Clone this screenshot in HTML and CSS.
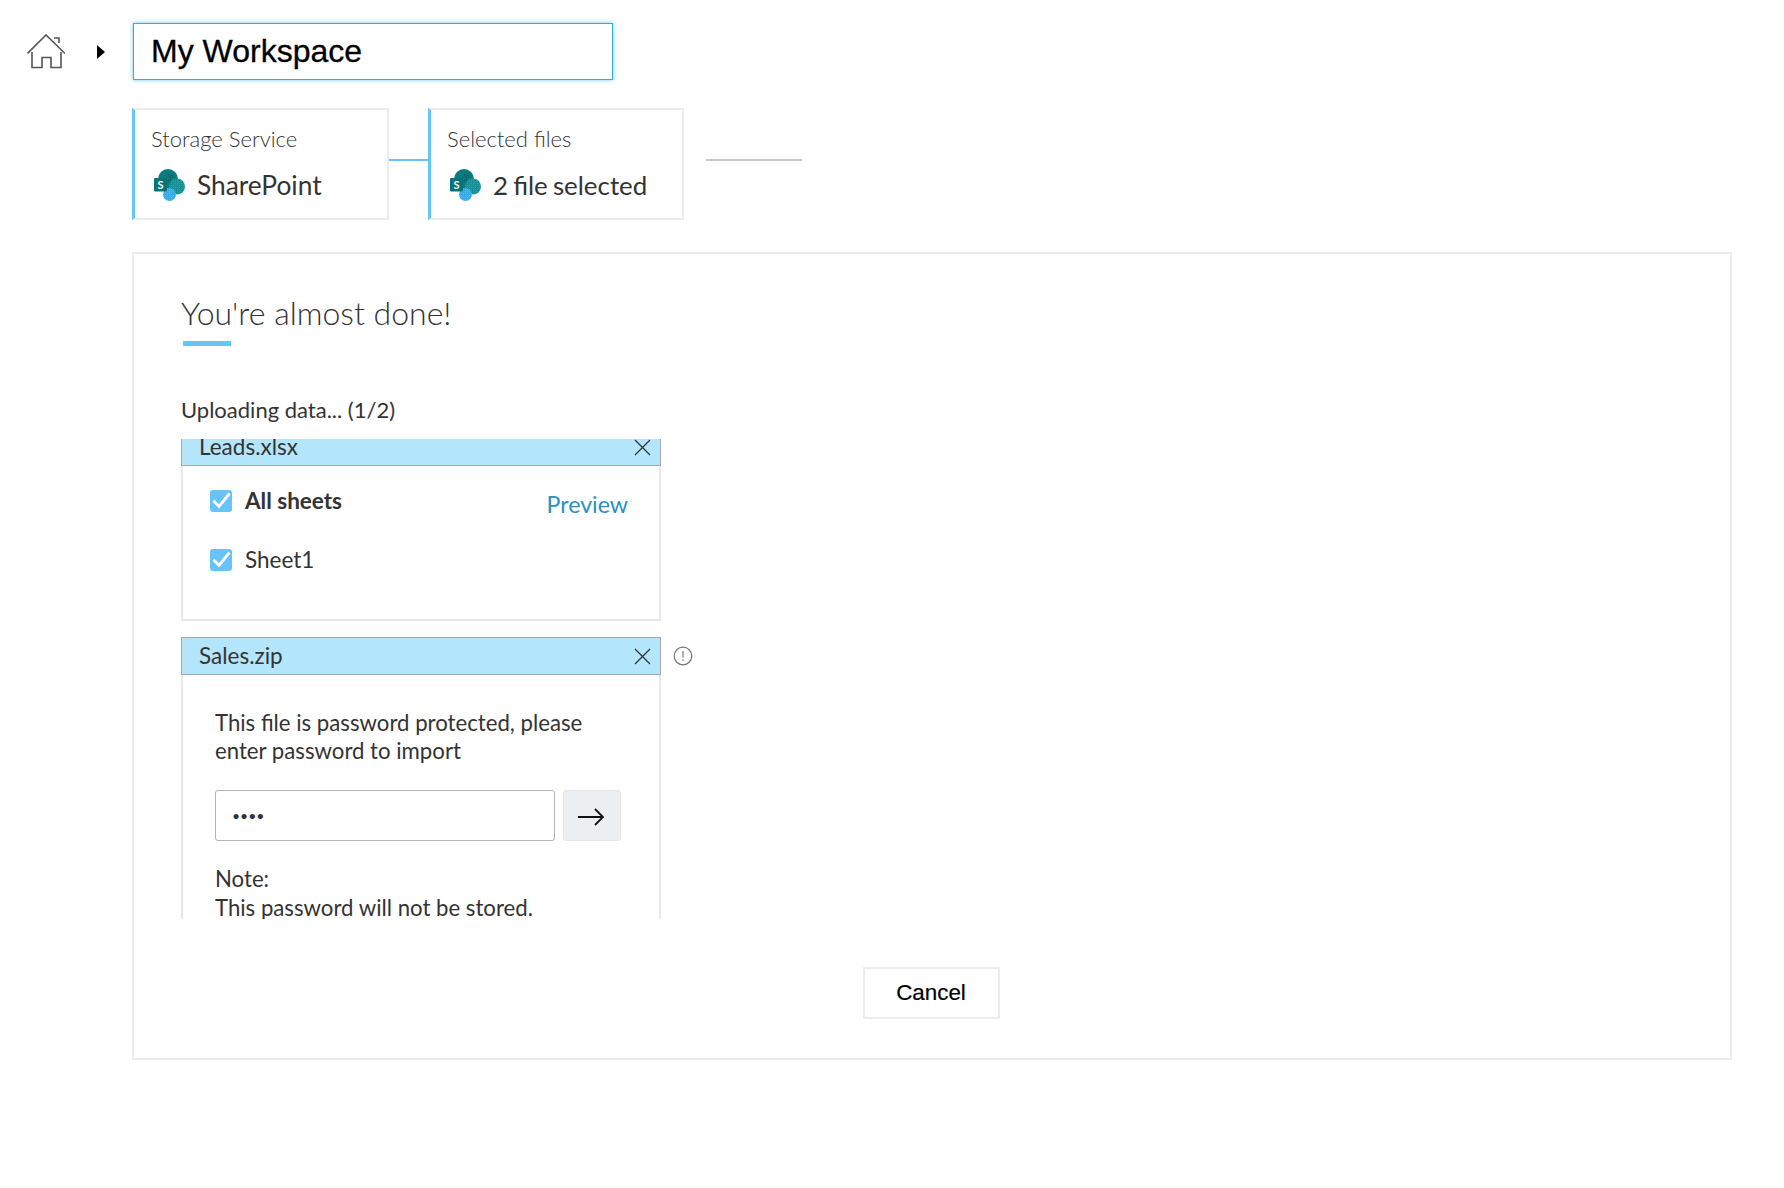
FILE: index.html
```html
<!DOCTYPE html>
<html lang="en">
<head>
<meta charset="utf-8">
<title>My Workspace</title>
<link rel="stylesheet" href="styles.css">
</head>
<body>
<svg class="sprite" width="0" height="0" aria-hidden="true">
  <defs>
    <pattern id="dots-teal" width="2" height="2" patternUnits="userSpaceOnUse">
      <rect width="2" height="2" fill="#1a8f94"/>
      <circle cx="0.6" cy="0.6" r="0.35" fill="#5fc0c2"/>
    </pattern>
    <pattern id="dots-blue" width="2" height="2" patternUnits="userSpaceOnUse">
      <rect width="2" height="2" fill="#38ace6"/>
      <circle cx="0.6" cy="0.6" r="0.4" fill="#8ad4f5"/>
    </pattern>
  </defs>
  <symbol id="sharepoint" viewBox="0 0 32 32">
    <circle cx="15" cy="10" r="10" fill="#0b7a7e"/>
    <circle cx="24" cy="17.5" r="8" fill="url(#dots-teal)"/>
    <circle cx="16.5" cy="25.5" r="6.5" fill="url(#dots-blue)"/>
    <rect x="1" y="9" width="13" height="13.5" rx="1" fill="#0a7377"/>
    <path d="M15 6h1M18 6h1M16.500 8h1M19 8h1M15 11h1M17 11h1" stroke="#12403f" stroke-width="1"/>
  </symbol>
  <symbol id="close" viewBox="0 0 17 17">
    <path d="M1 1 16 16M16 1 1 16" fill="none" stroke="#333" stroke-width="1.3"/>
  </symbol>
  <symbol id="check" viewBox="0 0 22 22">
    <rect width="22" height="22" rx="3" fill="#66c4fb"/>
    <path d="M3.500 10.700 9 16.500 19.500 3.500" fill="none" stroke="#fff" stroke-width="2.800"/>
  </symbol>
</svg>

<header class="topbar">
  <svg class="home" width="38" height="35" viewBox="0 0 38 35">
    <path d="M0.5 19.5 19 1 38 19.5M27 4H32V9M5 18V33.5H15V23.5H24V33.5H34V18" fill="none" stroke="#555" stroke-width="1.6"/>
  </svg>
  <span class="crumb-arrow"></span>
  <div class="name-field">My Workspace</div>
</header>

<section class="stages">
  <div class="stage">
    <div class="stage-label">Storage Service</div>
    <div class="stage-value">
      <svg class="sp-icon" viewBox="0 0 32 32"><use href="#sharepoint"/><text x="7.500" y="20" class="sp-letter">S</text></svg>
      <span class="value-text">SharePoint</span>
    </div>
  </div>
  <span class="link link-done"></span>
  <div class="stage stage-narrow">
    <div class="stage-label">Selected files</div>
    <div class="stage-value">
      <svg class="sp-icon" viewBox="0 0 32 32"><use href="#sharepoint"/><text x="7.500" y="20" class="sp-letter">S</text></svg>
      <span class="value-text tight">2 file selected</span>
    </div>
  </div>
  <span class="link link-todo"></span>
</section>

<main class="panel">
  <div class="panel-main">
    <h1 class="title">You're almost done!</h1>
    <div class="title-rule"></div>
    <p class="status">Uploading data... (1/2)</p>
    <div class="file-list">
      <article class="file file-first">
        <div class="file-head-row">
          <div class="file-head"><span class="file-name">Leads.xlsx</span><svg class="close"><use href="#close"/></svg></div>
        </div>
        <div class="file-body sheets">
          <div class="sheet-row">
            <svg class="check"><use href="#check"/></svg>
            <strong class="sheet-name">All sheets</strong>
            <a class="preview">Preview</a>
          </div>
          <div class="sheet-row">
            <svg class="check"><use href="#check"/></svg>
            <span class="sheet-name">Sheet1</span>
          </div>
        </div>
      </article>
      <article class="file">
        <div class="file-head-row">
          <div class="file-head"><span class="file-name">Sales.zip</span><svg class="close"><use href="#close"/></svg></div>
          <svg class="info" width="20" height="20" viewBox="0 0 20 20">
            <circle cx="10" cy="10" r="8.8" fill="none" stroke="#777" stroke-width="1.2"/>
            <path d="M10 5V11.5M10 13.5V15" fill="none" stroke="#777" stroke-width="1.2"/>
          </svg>
        </div>
        <div class="file-body password">
          <p class="pw-text">This file is password protected, please<br>enter password to import</p>
          <div class="pw-row">
            <input class="pw-input" type="password" value="abcd">
            <button class="pw-go" type="button">
              <svg class="pw-arrow" width="26" height="18" viewBox="0 0 26 18"><path d="M0 9H25M17 1 25 9 17 17" fill="none" stroke="#111" stroke-width="1.8"/></svg>
            </button>
          </div>
          <p class="pw-note">Note:<br>This password will not be stored.</p>
        </div>
      </article>
    </div>
  </div>
  <div class="actions"><button class="cancel" type="button">Cancel</button></div>
</main>
</body>
</html>
```

FILE: styles.css
```css
* { box-sizing: border-box; }
html, body { margin: 0; background: #fff; }
body {
  font-family: Lato, "Open Sans", sans-serif;
  color: #333;
  width: 1784px;
  height: 1188px;
  overflow: hidden;
  padding-top: 23px;
  text-rendering: optimizeLegibility;
  font-variant-ligatures: common-ligatures;
}
p, h1 { margin: 0; }
.sprite { position: absolute; }
.sp-letter { font: 700 11px Lato, sans-serif; fill: #fff; text-anchor: middle; }

.topbar { display: flex; align-items: center; height: 57px; padding-left: 27px; }
.home { flex: none; }
.crumb-arrow {
  width: 0; height: 0; margin-left: 32px;
  border-left: 8px solid #000;
  border-top: 7.5px solid transparent;
  border-bottom: 7.5px solid transparent;
}
.name-field {
  width: 480px; height: 57px; margin-left: 28px; padding-left: 17px;
  border: 1.5px solid #2bb0e6;
  box-shadow: 0 0 4px rgba(43, 176, 230, .7);
  font: 32px/54px "Liberation Sans", Arial, sans-serif;
  -webkit-text-stroke: 0.3px #000;
  color: #000;
}

.stages { display: flex; align-items: center; margin: 28px 0 0 132px; }
.stage {
  width: 257px; height: 112px; padding: 14px 0 0 16px;
  border: 2px solid #ececec; border-left: 3px solid #66c4fb;
}
.stage-narrow { width: 256px; }
.stage-label { font-weight: 300; font-size: 22px; line-height: 30px; color: #333; }
.stage-value { display: flex; align-items: center; margin-top: 14px; font-size: 26.3px; line-height: 32px; }
.value-text { margin-top: 1px; }
.sp-icon { width: 32px; height: 32px; margin: 0 12px 0 2px; flex: none; }
.tight { font-size: 25.9px; word-spacing: -1.5px; }
.link { height: 1.5px; margin-bottom: 8px; }
.link-done { width: 39px; background: #66c4fb; }
.link-todo { width: 96px; margin-left: 22px; background: #c8c8c8; }

.panel {
  width: 1600px; height: 808px; margin: 32px 0 0 132px; padding-top: 39px;
  border: 2px solid #ececec;
}
.panel-main { padding-left: 47px; }
.title { font-weight: 300; font-size: 32px; line-height: 40px; color: #333; }
.title-rule { width: 48px; height: 5px; margin: 8px 0 0 2px; background: #66c4fb; }
.status { margin-top: 50px; font-size: 22px; line-height: 28px; }

.file-list { width: 520px; height: 480px; margin-top: 15px; overflow: hidden; }
.file-first { margin-top: -11px; margin-bottom: 16px; }
.file-head-row { display: flex; align-items: center; }
.file-head {
  display: flex; align-items: center; justify-content: space-between;
  width: 480px; height: 38px; padding: 0 9px 0 17px;
  background: #b3e5fd; border: 1.5px solid #a8a8a8;
  font-size: 22.5px;
}
.file-name { margin-top: -1px; }
.close { width: 17px; height: 17px; }
.info { margin-left: 12px; }
.file-body {
  width: 480px;
  border: 2px solid #e8e8e8; border-top: 0;
}
.sheets { height: 155px; padding: 24px 31px 0 27px; }
.sheet-row { display: flex; align-items: center; height: 22px; margin-bottom: 37px; font-size: 22.5px; }
.check { width: 22px; height: 22px; flex: none; margin-right: 13px; }
.sheet-name { font-weight: 400; margin-top: -2px; }
strong.sheet-name { font-weight: 700; }
.preview { margin: 6px 0 0 auto; color: #2a90c2; font-size: 23.2px; }

.password { padding: 34px 0 40px 32px; border-bottom: 0; }
.pw-text, .pw-note { font-size: 22.2px; line-height: 28.5px; }
.pw-text { line-height: 27.5px; }
.pw-row { display: flex; gap: 8px; margin-top: 26px; }
.pw-input {
  width: 340px; height: 51px; padding: 0 16px;
  border: 1px solid #b4b4b4; border-radius: 3px;
  font: 14px Lato, sans-serif; color: #333; background: #fff;
}
.pw-go {
  display: flex; align-items: center; justify-content: center;
  width: 58px; height: 51px; padding: 0;
  background: #eceff1; border: 1px solid #e4e6e8; border-radius: 3px;
}
.pw-arrow { margin: 3px 2px 0 0; }
.pw-note { margin-top: 24px; }

.actions { display: flex; justify-content: center; margin: 48px 2px 0 0; }
.cancel {
  width: 137px; height: 52px; padding: 0;
  background: #fff; border: 2px solid #ececec;
  font: 22.4px "Liberation Sans", Arial, sans-serif; color: #000;
  -webkit-text-stroke: 0.2px #000;
}
```
